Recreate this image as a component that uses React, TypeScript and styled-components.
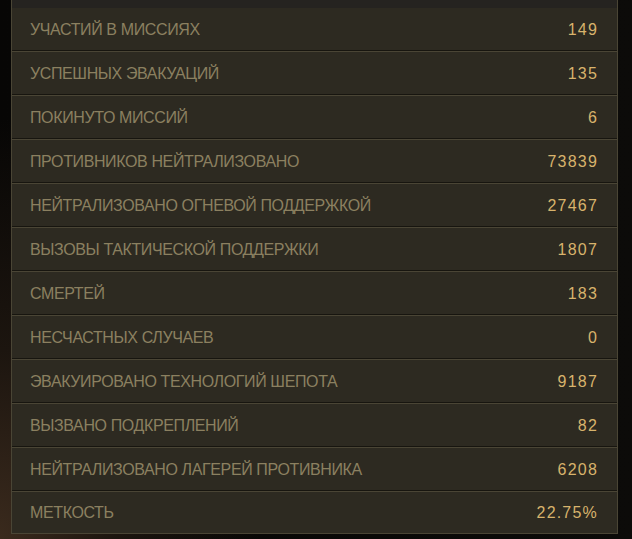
import styled, { createGlobalStyle } from "styled-components";

const stats = [
  { label: "УЧАСТИЙ В МИССИЯХ", value: "149" },
  { label: "УСПЕШНЫХ ЭВАКУАЦИЙ", value: "135" },
  { label: "ПОКИНУТО МИССИЙ", value: "6" },
  { label: "ПРОТИВНИКОВ НЕЙТРАЛИЗОВАНО", value: "73839" },
  { label: "НЕЙТРАЛИЗОВАНО ОГНЕВОЙ ПОДДЕРЖКОЙ", value: "27467" },
  { label: "ВЫЗОВЫ ТАКТИЧЕСКОЙ ПОДДЕРЖКИ", value: "1807" },
  { label: "СМЕРТЕЙ", value: "183" },
  { label: "НЕСЧАСТНЫХ СЛУЧАЕВ", value: "0" },
  { label: "ЭВАКУИРОВАНО ТЕХНОЛОГИЙ ШЕПОТА", value: "9187" },
  { label: "ВЫЗВАНО ПОДКРЕПЛЕНИЙ", value: "82" },
  { label: "НЕЙТРАЛИЗОВАНО ЛАГЕРЕЙ ПРОТИВНИКА", value: "6208" },
  { label: "МЕТКОСТЬ", value: "22.75%" },
];

const GlobalStyle = createGlobalStyle`
  html, body {
    margin: 0;
    padding: 0;
    height: 100%;
  }
  body {
    background: #0a0908;
    font-family: "Liberation Sans", Arial, sans-serif;
  }
`;

const Page = styled.div`
  width: 632px;
  height: 539px;
  overflow: hidden;
  padding-left: 11px;
  box-sizing: border-box;
  background:
    radial-gradient(ellipse 260px 420px at 0% 100%, #3a2a1d 0%, #1c150f 45%, rgba(10, 9, 8, 0) 100%),
    linear-gradient(90deg, #070605 0%, #0c0b09 100%);
`;

const Panel = styled.div`
  width: 607px;
  box-sizing: border-box;
  border: 1px solid #4a4535;
  border-top: none;
  background: #2d2a21;
`;

const Header = styled.div`
  height: 8px;
  background: #252320;
`;

const Row = styled.div`
  display: flex;
  align-items: center;
  justify-content: space-between;
  height: 42px;
  padding: 0 19px 0 18px;
  border-top: 1px solid #4a4535;
  border-bottom: 1px solid #17150f;

  &:first-of-type {
    border-top: none;
  }
  &:last-of-type {
    border-bottom: none;
    height: 41px;
  }
`;

const Label = styled.span`
  font-size: 16px;
  letter-spacing: -0.38px;
  color: #8b8060;
  padding-top: 1px;
`;

const Value = styled.span`
  font-size: 16px;
  letter-spacing: 1.2px;
  color: #d8b36c;
  padding-top: 1px;
`;

export default function App() {
  return (
    <>
      <GlobalStyle />
      <Page>
        <Panel>
          <Header />
          <div>
            {stats.map((s) => (
              <Row key={s.label}>
                <Label>{s.label}</Label>
                <Value>{s.value}</Value>
              </Row>
            ))}
          </div>
        </Panel>
      </Page>
    </>
  );
}
